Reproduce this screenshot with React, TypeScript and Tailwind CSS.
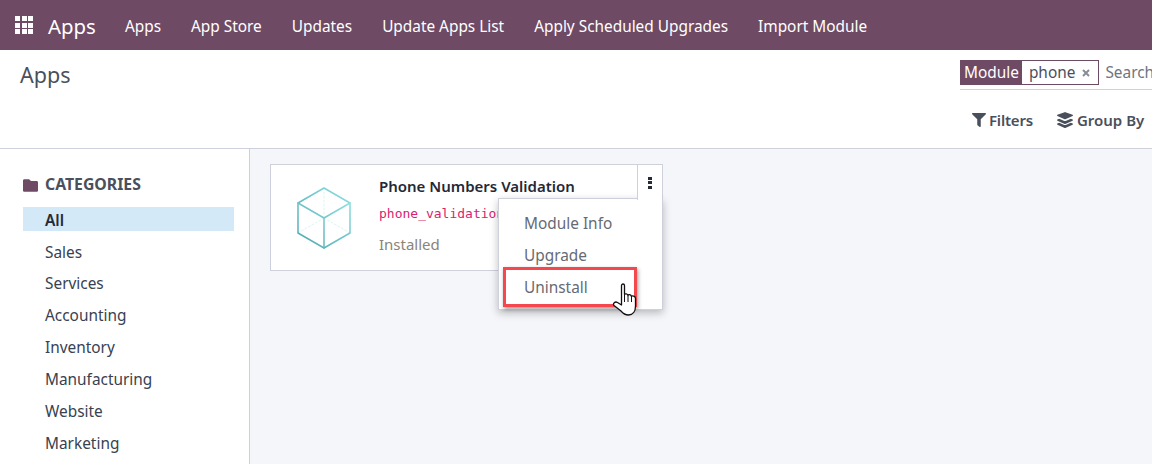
const NAV = ["Apps", "App Store", "Updates", "Update Apps List", "Apply Scheduled Upgrades", "Import Module"];
const CATS = ["Sales", "Services", "Accounting", "Inventory", "Manufacturing", "Website", "Marketing"];

function Cube() {
  return (
    <svg width="56" height="65" viewBox="0 0 56 65" fill="none" strokeLinejoin="round" strokeLinecap="round">
      <defs>
        <linearGradient id="cb" x1="0" y1="1" x2="1" y2="0">
          <stop offset="0" stopColor="#4fa8b0" />
          <stop offset="1" stopColor="#8fe0e2" />
        </linearGradient>
      </defs>
      <g stroke="#d4f0f0" strokeWidth="0.8" strokeDasharray="2 2">
        <path d="M28 2V32M2 47L28 32M54 47L28 32" />
      </g>
      <g stroke="url(#cb)" strokeWidth="1.5">
        <path d="M28 2L54 17V47L28 62L2 47V17Z" />
        <path d="M2 17L28 32L54 17M28 32V62" />
      </g>
    </svg>
  );
}

function Grid() {
  return (
    <div className="grid grid-cols-3 gap-[1.5px] w-[18px] h-[18px]">
      {Array.from({ length: 9 }).map((_, i) => (
        <div key={i} className="bg-white" />
      ))}
    </div>
  );
}

function Hand() {
  return (
    <svg width="26" height="34" viewBox="0 0 26 34" className="absolute left-[612px] top-[282px] z-30">
      <path
        d="M9.5 3.5C9.5 1.5 12.5 1.5 12.5 3.5V12.5C13 11.5 15.5 11.5 16 13.5C16.5 12 19 12.5 19.5 14.5C20 13.5 23.5 14 23.5 16.5V24C23.5 29 21 33 16.5 33C12.5 33 11 31.5 9 29L2 23.5C0.5 21.5 3 19 5.5 20.5L9.5 23Z"
        fill="#fff"
        stroke="#111"
        strokeWidth="1.3"
        strokeLinejoin="round"
      />
      <path d="M12.5 13V20M16 14V20M19.5 15V20" stroke="#111" strokeWidth="1" />
    </svg>
  );
}

export default function App() {
  return (
    <div className="relative w-[1152px] h-[464px] overflow-hidden bg-white text-[#4a4f5c] font-['Noto_Sans','Open_Sans',sans-serif] text-[15.4px]">
      <header className="h-[50px] bg-[#6f4a65] flex items-center text-white">
        <div className="ml-[15px]"><Grid /></div>
        <span className="ml-[15px] text-[20.4px] mr-[29px] pt-[2px]">Apps</span>
        <nav className="flex gap-[30px] pt-[4px] text-[15.38px]">
          {NAV.map((n) => (
            <span key={n}>{n}</span>
          ))}
        </nav>
      </header>

      <section className="h-[99px] border-b border-[#ced0dc] flex justify-between overflow-hidden">
        <h1 className="ml-[20px] mt-[8px] text-[21.5px] text-[#4a4f5c] leading-[34px]">Apps</h1>
        <div className="w-[192px] shrink-0 pt-[10px]">
          <div className="w-[240px] border-b border-[#ced0dc] h-[30px] flex items-start">
            <div className="flex h-[25px] items-stretch border border-[#6f4a65]">
              <span className="bg-[#6f4a65] text-white px-[3px] flex items-center leading-none">Module</span>
              <span className="flex items-center pl-[7px] pr-[8px] gap-[7px] pt-[1px] text-[#4a4f5c]">
                phone
                <svg width="8" height="8" viewBox="0 0 8 8" stroke="#8a8d96" strokeWidth="2"><path d="M1 1L7 7M7 1L1 7" /></svg>
              </span>
            </div>
            <span className="ml-[6px] text-[#6f7480] leading-[25px] whitespace-nowrap">Search...</span>
          </div>
          <div className="flex mt-[19px] ml-[12px] gap-[24px] font-semibold text-[15px] whitespace-nowrap">
            <span className="flex items-center gap-[3px] tracking-[-0.2px]">
              <svg width="14" height="14" viewBox="0 0 512 512" fill="#4a4f5c"><path d="M487 0H25C3 0-9 27 7 43l185 184v205c0 8 4 15 10 20l80 56c16 11 38 0 38-20V227L505 43c16-16 4-43-18-43z" /></svg>
              Filters
            </span>
            <span className="flex items-center gap-[4px]">
              <svg width="16" height="16" viewBox="0 0 512 512" fill="#4a4f5c"><path d="M13 125l232 105c7 3 15 3 22 0l232-105c17-8 17-33 0-41L267 4c-7-3-15-3-22 0L13 84c-17 8-17 33 0 41zM499 238l-58-26-161 73c-8 3-16 5-24 5s-16-2-24-5L71 212l-58 26c-17 8-17 33 0 41l232 105c7 3 15 3 22 0l232-105c17-8 17-33 0-41zM499 366l-58-26-160 73c-8 3-16 5-25 5s-17-2-25-5L71 340l-58 26c-17 8-17 33 0 41l232 105c7 3 15 3 22 0l232-105c17-8 17-33 0-41z" /></svg>
              Group By
            </span>
          </div>
        </div>
      </section>

      <div className="flex h-[315px] bg-[#f5f6fa]">
        <aside className="w-[250px] shrink-0 bg-white border-r border-[#ced0dc] pl-[23px] pr-[15px] pt-[26px]">
          <div className="flex items-center gap-[7px] font-bold text-[15.8px] h-[20px] text-[#4a4f5c]">
            <svg width="15" height="13" viewBox="0 0 512 430" fill="#6f4a65"><path d="M464 64H272L208 0H48C21 0 0 21 0 48v334c0 27 21 48 48 48h416c27 0 48-21 48-48V112c0-27-21-48-48-48z" /></svg>
            CATEGORIES
          </div>
          <div className="mt-[12px] h-[24px] bg-[#d4e9f7] pl-[22px] pt-[3px] flex items-center font-semibold text-[#262a36]">All</div>
          <ul className="text-[#374151]">
            {CATS.map((c, i) => (
              <li key={c} className={`pl-[22px] pt-[2px] flex items-center ${i === 0 ? "mt-[5px] h-[31px]" : "h-[32px]"}`}>{c}</li>
            ))}
          </ul>
        </aside>
        <main className="pl-[20px] pt-[15px]">
          <article className="relative w-[393px] h-[107px] bg-white border border-[#ced0dc] flex">
            <div className="ml-[25px] mt-[21px]"><Cube /></div>
            <div className="ml-[27px] mt-[10px]">
              <div className="font-semibold text-[15px] text-[#1f2937] leading-[22px] whitespace-nowrap">Phone Numbers Validation</div>
              <div className="mt-[8px] font-['DejaVu_Sans_Mono',monospace] text-[13px] text-[#d6246e] leading-[18px]">phone_validation</div>
              <div className="mt-[11px] text-[15px] text-[#8a8479] leading-[20px]">Installed</div>
            </div>
            <div className="absolute z-20 right-0 top-0 w-[25px] h-[35px] bg-white border-l border-[#ced0dc] flex flex-col items-center justify-center gap-[1.5px]">
              <i className="w-[4px] h-[3px] bg-[#262a36] block" />
              <i className="w-[4px] h-[3px] bg-[#262a36] block" />
              <i className="w-[4px] h-[3px] bg-[#262a36] block" />
            </div>
          </article>
        </main>
      </div>

      <div className="absolute z-10 left-[498px] top-[198px] w-[165px] h-[112px] bg-white border border-[#ced0dc] shadow-[0_3px_8px_rgba(0,0,0,0.25)] pt-[9px] pl-[25px] text-[#666a73]">
        <div className="h-[32px] flex items-center">Module Info</div>
        <div className="h-[32px] flex items-center">Upgrade</div>
        <div className="h-[32px] flex items-center">Uninstall</div>
      </div>
      <div className="absolute z-20 left-[503px] top-[267px] w-[134px] h-[40px] border-[3px] border-[#f4484e] shadow-[1px_2px_4px_rgba(0,0,0,0.4)]" />
      <Hand />
    </div>
  );
}
